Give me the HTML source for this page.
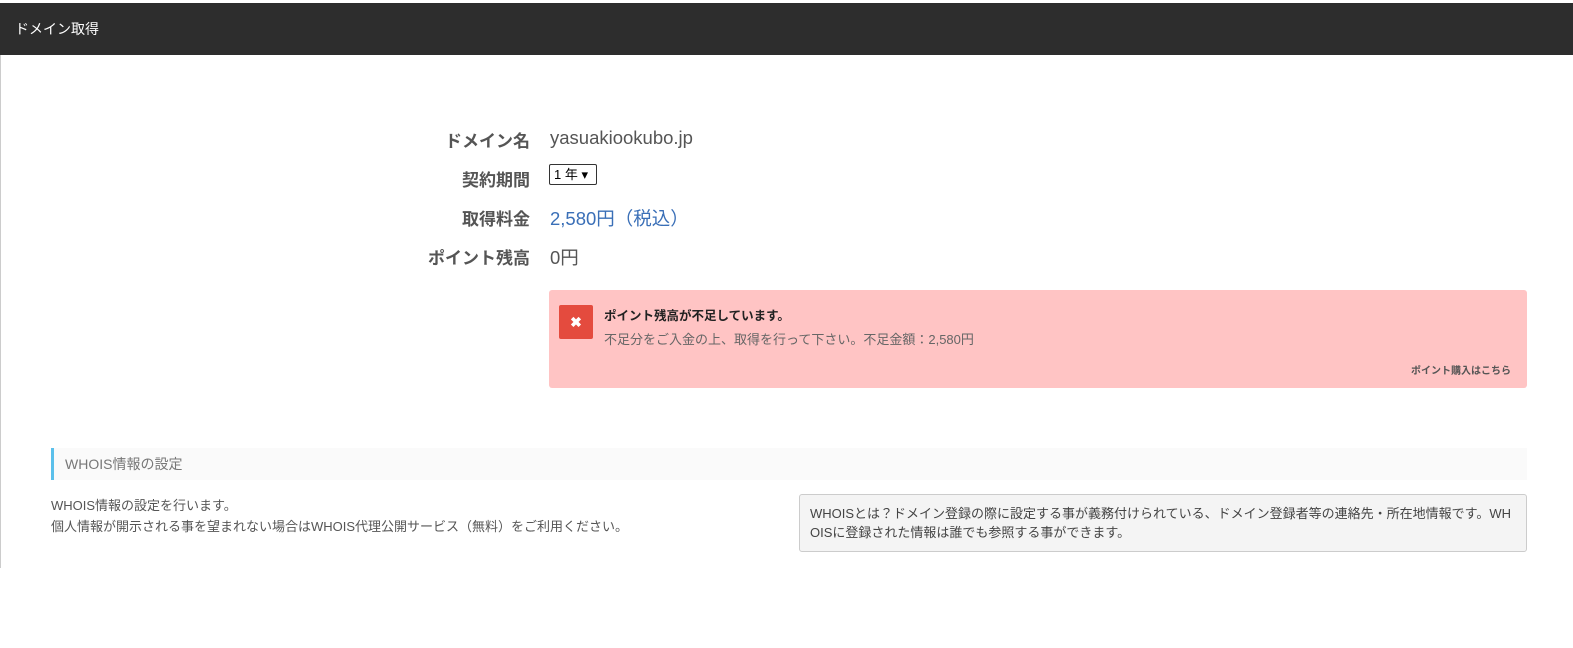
<!DOCTYPE html>
<html><head><meta charset="utf-8"><style>
*{margin:0;padding:0;box-sizing:border-box}
body{width:1573px;height:648px;background:#fff;font-family:"Liberation Sans","Noto Sans CJK JP",sans-serif;color:#555;position:relative;overflow:hidden}
.hdr{position:absolute;left:0;top:3px;width:1573px;height:52px;background:#2d2d2d;color:#fff;font-size:14px;line-height:52px;padding-left:15px}
.lb{position:absolute;left:0;top:55px;width:1px;height:513px;background:#ccc}
.lab{position:absolute;right:1043px;font-weight:bold;font-size:17px;color:#555;text-align:right}
.val{position:absolute;left:550px;font-size:18.5px;color:#555}
.sel{position:absolute;left:549px;top:164px;width:48px;height:21px;border:1px solid #333;border-radius:2px;font-size:13px;color:#000;padding-left:4px;line-height:19px}
.alert{position:absolute;left:549px;top:290px;width:978px;height:98px;background:#ffc4c4;border-radius:3px}
.x{position:absolute;left:10px;top:15px;width:34px;height:34px;background:#e44b3e;border-radius:2px;color:#fff;font-weight:bold;font-size:14px;text-align:center;line-height:34px}
.sec{position:absolute;left:51px;top:448px;width:1476px;height:32px;background:#fafafa;border-left:3px solid #5bc0eb;font-size:14px;color:#777;line-height:32px;padding-left:11px}
.box{position:absolute;left:799px;top:494px;width:728px;height:58px;background:#f4f4f4;border:1px solid #ccc;border-radius:3px;font-size:13px;color:#444;line-height:19px;padding:9px 10px;word-break:break-all}
</style></head><body>
<div class="hdr">ドメイン取得</div>
<div class="lb"></div>
<div class="lab" style="top:127px">ドメイン名</div><div class="val" style="top:127px">yasuakiookubo.jp</div>
<div class="lab" style="top:166px">契約期間</div><div class="sel">1 年 ▾</div>
<div class="lab" style="top:205px">取得料金</div><div class="val" style="top:205px;color:#3a6fb7">2,580円（税込）</div>
<div class="lab" style="top:244px">ポイント残高</div><div class="val" style="top:244px">0円</div>
<div class="alert"><div class="x">✖</div>
<div style="position:absolute;left:55px;top:15px;font-size:12.5px;font-weight:bold;color:#222">ポイント残高が不足しています。</div>
<div style="position:absolute;left:55px;top:39px;font-size:13px;color:#666">不足分をご入金の上、取得を行って下さい。不足金額：2,580円</div>
<div style="position:absolute;right:16px;top:72px;font-size:10px;font-weight:bold;color:#555">ポイント購入はこちら</div></div>
<div class="sec">WHOIS情報の設定</div>
<div style="position:absolute;left:51px;top:495px;font-size:13px;color:#555;line-height:21px">WHOIS情報の設定を行います。<br>個人情報が開示される事を望まれない場合はWHOIS代理公開サービス（無料）をご利用ください。</div>
<div class="box">WHOISとは？ドメイン登録の際に設定する事が義務付けられている、ドメイン登録者等の連絡先・所在地情報です。WHOISに登録された情報は誰でも参照する事ができます。</div>
</body></html>
